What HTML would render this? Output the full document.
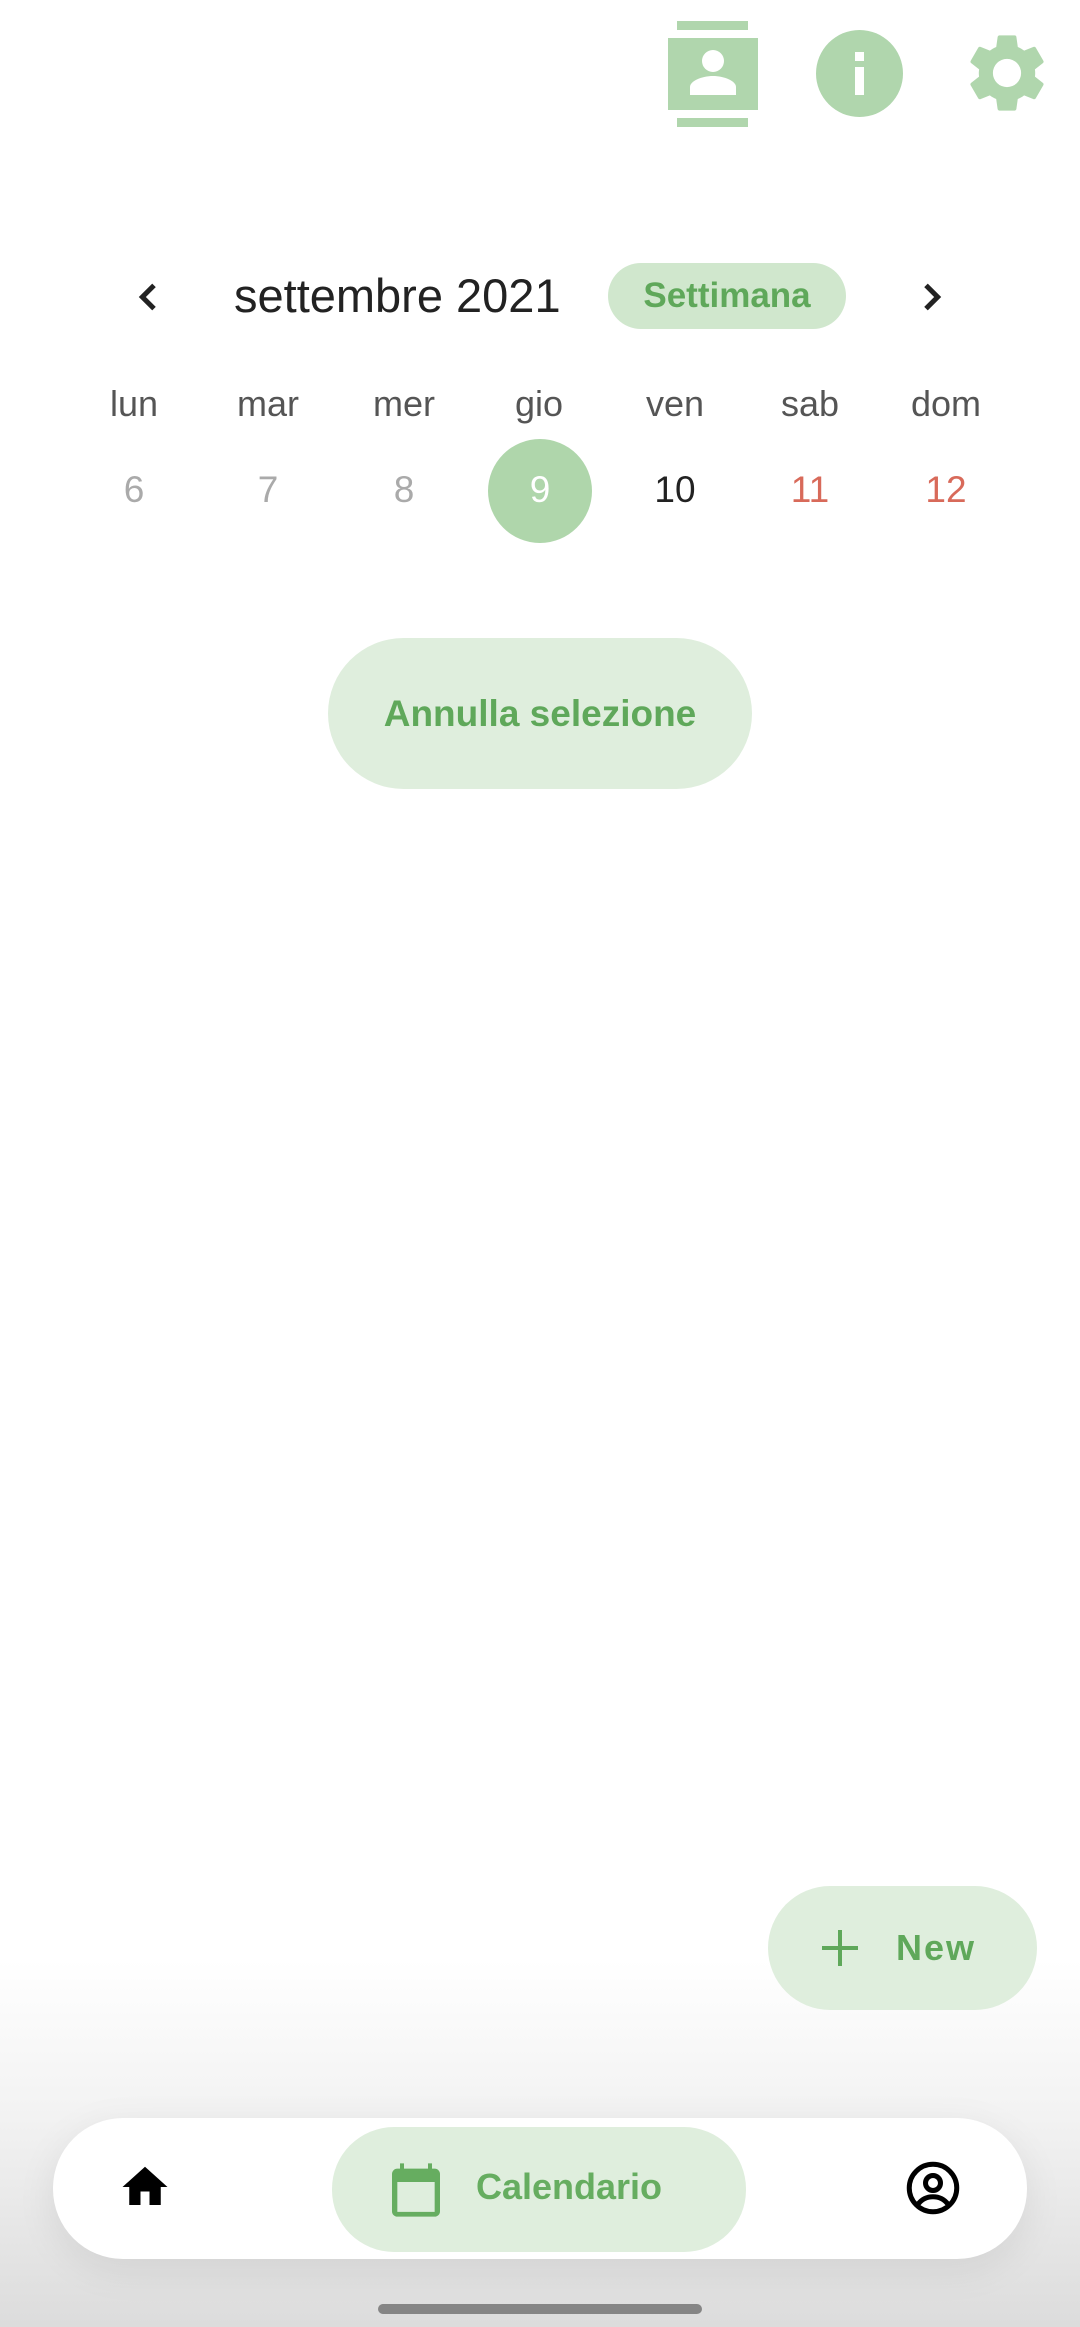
<!DOCTYPE html>
<html><head><meta charset="utf-8"><style>
body{margin:0;width:1080px;height:2327px;position:relative;background:#fff;font-family:"Liberation Sans",Roboto,sans-serif;overflow:hidden}
.a{position:absolute}
.c{text-align:center;transform:translateX(-50%)}
.wd{top:383px;font-size:36px;color:#555}
.dt{top:469px;font-size:37px}
</style></head><body>
<div class="a" style="left:0;top:1960px;width:1080px;height:367px;background:linear-gradient(#fff,#f3f3f3 40%,#dcdcdc)"></div>
<svg class="a" style="left:668px;top:21px" width="90" height="106" viewBox="0 0 90 106"><g fill="#b0d6ad"><rect x="9" y="0" width="71" height="9"/><rect x="9" y="97" width="71" height="9"/><rect x="0" y="17" width="90" height="72"/></g><g fill="#fff"><circle cx="45" cy="40" r="11"/><path d="M22 74v-8c0-6 12-11 23-11s23 5 23 11v8z"/></g></svg>
<svg class="a" style="left:816px;top:30px" width="87" height="87" viewBox="0 0 87 87"><circle cx="43.5" cy="43.5" r="43.5" fill="#b0d6ad"/><rect x="39" y="22" width="9" height="9" fill="#fff"/><rect x="39" y="37" width="9" height="28" fill="#fff"/></svg>
<svg class="a" style="left:960px;top:26px" width="94" height="94" viewBox="0 0 24 24"><path fill="#b0d6ad" d="M19.14 12.94c.04-.3.06-.61.06-.94 0-.32-.02-.64-.07-.94l2.03-1.58a.49.49 0 00.12-.61l-1.92-3.32a.49.49 0 00-.59-.22l-2.39.96c-.5-.38-1.03-.7-1.620-.94l-.36-2.54a.48.48 0 00-.48-.41h-3.84c-.24 0-.43.17-.47.41l-.36 2.54c-.59.24-1.13.57-1.62.94l-2.39-.96a.48.48 0 00-.59.22L2.74 8.87c-.12.21-.08.47.12.61l2.03 1.58c-.05.3-.09.63-.09.94s.02.64.07.94l-2.03 1.58a.49.49 0 00-.12.61l1.92 3.32c.12.22.37.29.59.22l2.39-.96c.5.38 1.03.7 1.62.94l.36 2.54c.05.24.24.41.48.41h3.84c.24 0 .44-.17.47-.41l.36-2.54c.59-.24 1.130-.56 1.62-.94l2.39.96c.22.08.47 0 .59-.22l1.92-3.32c.12-.22.07-.47-.12-.61zM12 15.6A3.6 3.6 0 1112 8.4a3.6 3.6 0 010 7.2z"/></svg>
<svg class="a" style="left:129px;top:277px" width="40" height="40" viewBox="0 0 24 24"><path d="M15 5l-7 7 7 7" fill="none" stroke="#222" stroke-width="3"/></svg>
<div class="a" style="left:234px;top:268px;font-size:47px;color:#222">settembre 2021</div>
<div class="a" style="left:608px;top:263px;width:238px;height:66px;border-radius:33px;background:#d0e7cd;color:#5fa85a;font-weight:bold;font-size:35px;line-height:66px;text-align:center">Settimana</div>
<svg class="a" style="left:911px;top:277px" width="40" height="40" viewBox="0 0 24 24"><path d="M9 5l7 7-7 7" fill="none" stroke="#222" stroke-width="3"/></svg>
<div class="a c wd" style="left:134px">lun</div><div class="a c wd" style="left:268px">mar</div><div class="a c wd" style="left:404px">mer</div><div class="a c wd" style="left:539px">gio</div><div class="a c wd" style="left:675px">ven</div><div class="a c wd" style="left:810px">sab</div><div class="a c wd" style="left:946px">dom</div>
<div class="a" style="left:488px;top:439px;width:104px;height:104px;border-radius:52px;background:#afd6ab"></div>
<div class="a c dt" style="left:134px;color:#aaa">6</div><div class="a c dt" style="left:268px;color:#aaa">7</div><div class="a c dt" style="left:404px;color:#aaa">8</div><div class="a c dt" style="left:540px;color:#fff">9</div><div class="a c dt" style="left:675px;color:#222">10</div><div class="a c dt" style="left:810px;color:#d86a5a">11</div><div class="a c dt" style="left:946px;color:#d86a5a">12</div>
<div class="a" style="left:328px;top:638px;width:424px;height:151px;border-radius:76px;background:#dfeedd;color:#5fa85a;font-weight:bold;font-size:37px;line-height:151px;text-align:center">Annulla selezione</div>
<div class="a" style="left:768px;top:1886px;width:269px;height:124px;border-radius:62px;background:#dfeedd;color:#5fa85a;font-weight:bold;font-size:36px;letter-spacing:2px;line-height:124px"><svg class="a" style="left:52px;top:42px" width="40" height="40" viewBox="0 0 40 40"><path d="M20 2v36M2 20h36" stroke="#5fa85a" stroke-width="4"/></svg><span class="a" style="left:128px">New</span></div>
<div class="a" style="left:53px;top:2118px;width:974px;height:141px;border-radius:70px;background:#fff;box-shadow:0 10px 40px rgba(0,0,0,.08)"></div>
<svg class="a" style="left:118px;top:2160px" width="54" height="54" viewBox="0 0 24 24"><path d="M10 20v-6h4v6h5v-8h3L12 3 2 12h3v8z"/></svg>
<div class="a" style="left:332px;top:2127px;width:414px;height:125px;border-radius:62px;background:#dfeedd"></div>
<svg class="a" style="left:384px;top:2158px" width="64" height="64" viewBox="0 0 24 24"><path fill="#66ad60" d="M19 4h-1V2h-1.5v2h-9V2H6v2H5a2 2 0 00-2 2v14a2 2 0 002 2h14a2 2 0 002-2V6a2 2 0 00-2-2zm0 16.2H5V9h14z"/></svg>
<div class="a" style="left:476px;top:2166px;font-size:36px;color:#66ad60;font-weight:bold">Calendario</div>
<svg class="a" style="left:903px;top:2158px" width="60" height="60" viewBox="0 0 24 24"><circle cx="12" cy="12" r="9.5" fill="none" stroke="#000" stroke-width="2"/><circle cx="12" cy="10" r="3" fill="none" stroke="#000" stroke-width="2"/><path d="M6 18.5c3-4 9-4 12 0" fill="none" stroke="#000" stroke-width="2"/></svg>
<div class="a" style="left:378px;top:2304px;width:324px;height:10px;border-radius:5px;background:#858585"></div>
</body></html>
